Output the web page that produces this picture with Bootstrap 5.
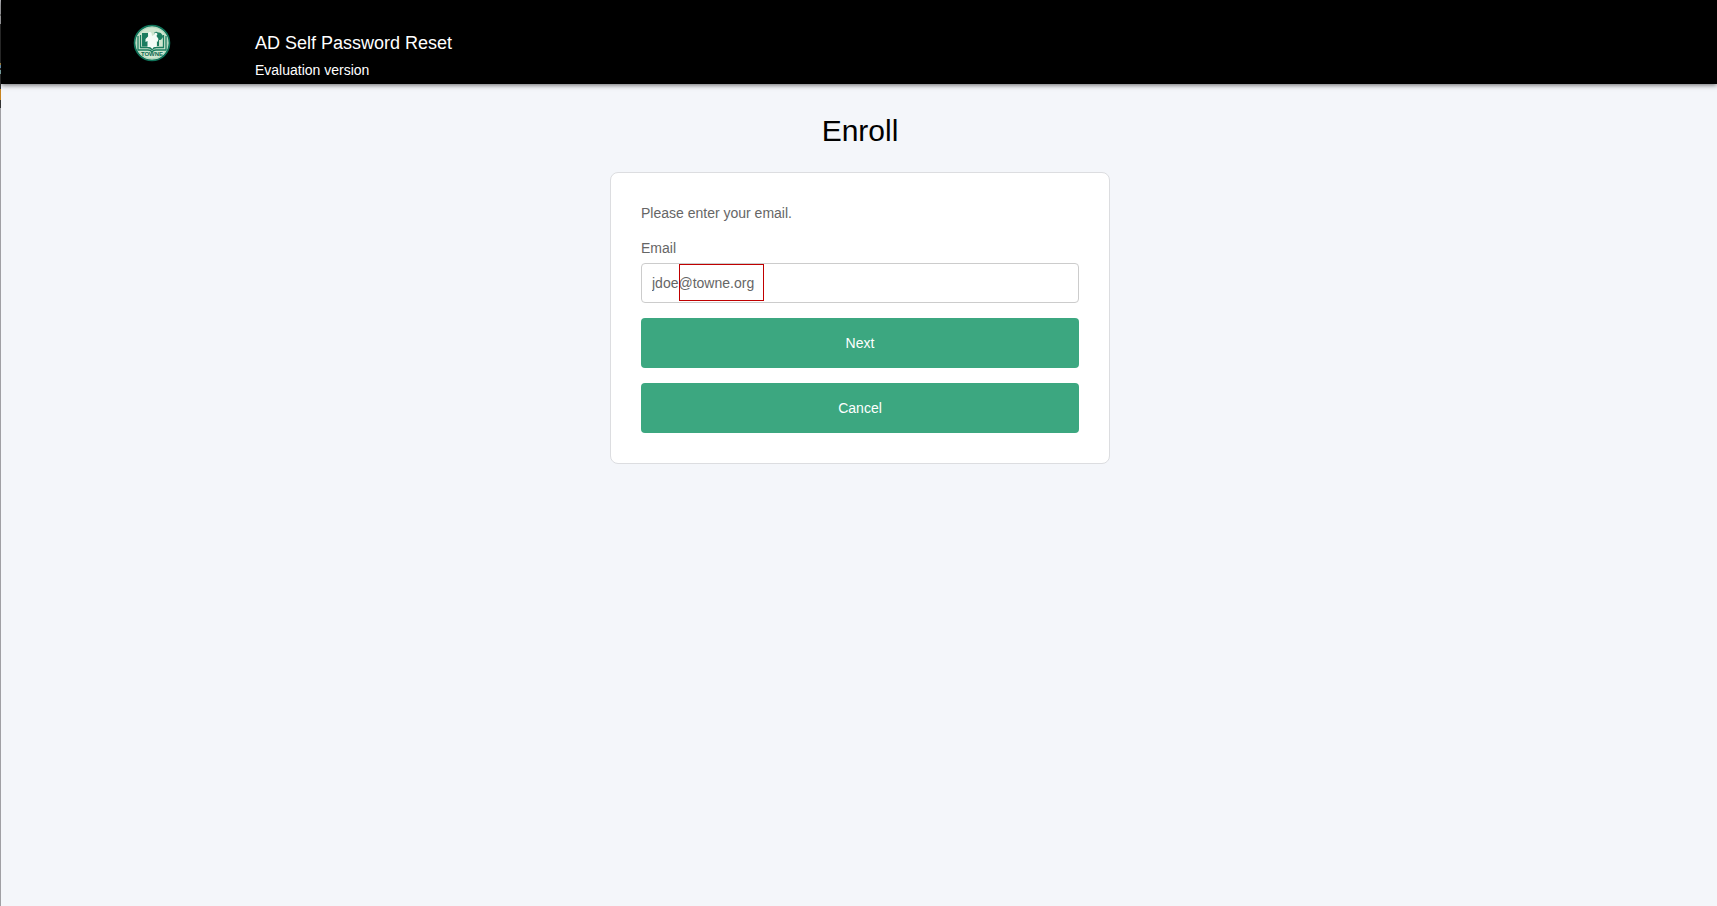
<!DOCTYPE html>
<html lang="en">
<head>
<meta charset="utf-8">
<meta name="viewport" content="width=device-width, initial-scale=1">
<title>AD Self Password Reset - Enroll</title>
<link href="https://cdn.jsdelivr.net/npm/bootstrap@5.3.0/dist/css/bootstrap.min.css" rel="stylesheet">
<style>
  body {
    font-family: "Liberation Sans", Arial, sans-serif;
    font-size: 14px;
    line-height: 20px;
    color: #666;
    background: #f4f6fa;
  }
  .window-edge {
    width: 1px;
    background: linear-gradient(#c0c0c4 0 14px, #888 14px 16px, #c0c0c4 16px 24px, #333 24px 63px, #c9a050 63px 65px, #7fb4d8 65px 68px, #333 68px 70px, #9cc 70px 74px, #333 74px 89px, #c88420 89px 100px, #333 100px 108px, #a0a0a4 108px);
  }
  .site-header {
    padding: 24px 24px 4px 132px;
    background: #000;
    box-shadow: 0 1px 5px rgba(0, 0, 0, .6);
  }
  .brand-logo { width: 38px; height: 38px; margin-right: 84px; }
  .brand-text { padding-top: 7px; }
  .brand-name { font-size: 18px; line-height: 24px; margin-bottom: 5px; }
  .page-main { padding: 29px 0 24px 2px; }
  .page-title { font-size: 30px; line-height: 36px; margin-bottom: 23px; color: #000; }
  .enroll-card {
    --bs-card-border-color: #dcdde0;
    --bs-card-border-radius: 8px;
    --bs-card-color: #666;
    width: 500px;
    max-width: 100%;
  }
  .enroll-card .card-body { padding: 30px; }
  .intro, .email-field { margin-bottom: 15px; }
  .email-field .form-label { margin-bottom: 5px; }
  .email-field .form-control {
    height: 40px;
    padding: 0 10px;
    border-color: #ccc;
    border-radius: 4px;
    color: #666;
    font-size: 14px;
  }
  .domain-mark { left: 38px; top: 1px; width: 85px; height: 37px; border: 1px solid #c00000; pointer-events: none; }
  .actions { gap: 15px; }
  .btn-enroll {
    --bs-btn-color: #fff;
    --bs-btn-bg: #3ca780;
    --bs-btn-hover-color: #fff;
    --bs-btn-hover-bg: #348f6e;
    --bs-btn-active-color: #fff;
    --bs-btn-active-bg: #2d7c5f;
    --bs-btn-border-width: 0;
    --bs-btn-border-radius: 4px;
    --bs-btn-font-size: 14px;
    height: 50px;
  }
</style>
</head>
<body>
<div class="d-flex min-vh-100">
  <div class="window-edge flex-shrink-0"></div>
  <div class="flex-grow-1">
    <header class="site-header d-flex align-items-start text-white">
      <svg class="brand-logo flex-shrink-0" viewBox="0 0 38 38" role="img" aria-label="Towne">
        <circle cx="19" cy="19" r="17.4" fill="#cfe6cf" stroke="#0f7359" stroke-width="1.8"/>
        <circle cx="19" cy="19" r="15.9" fill="none" stroke="#a9d1b8" stroke-width=".8"/>
        <!-- open book -->
        <path d="M5 12v14h10q3 0 4 2 1-2 4-2h10V12" fill="none" stroke="#1b7c5f" stroke-width="1.3"/>
        <path d="M7.500 11v12.500h7q3 0 4.500 2 1.500-2 4.500-2h7V11" fill="none" stroke="#1b7c5f" stroke-width="1.300"/>
        <path d="M9 9h6v13.500H9z" fill="#1b7c5f"/>
        <!-- tree -->
        <path d="M21 9q2-2 4-.5 3-.5 4 2 2 2 0 4-1 2-3 1.500v6h-2v-5l-3-1z" fill="#1b7c5f"/>
        <!-- figures -->
        <path d="M15 9q2-2 3.500 0l.5 3 2-1 .5-2q2-1 3 1l-1 2 2 3-1 3-1-1v6h-3l-1 2-2-2h-3v-6l-2 1v-3l3-3z" fill="#f4fcf6"/>
        <text x="19" y="32" text-anchor="middle" font-family="Liberation Sans, sans-serif" font-size="6" font-weight="700" fill="#0f6b50">TOWNE</text>
      </svg>
      <div class="brand-text">
        <div class="brand-name">AD Self Password Reset</div>
        <div>Evaluation version</div>
      </div>
    </header>
    <main class="page-main d-flex flex-column align-items-center">
      <h1 class="page-title fw-normal">Enroll</h1>
      <form class="card enroll-card">
        <div class="card-body">
          <p class="intro">Please enter your email.</p>
          <div class="email-field">
            <label class="form-label d-block" for="email">Email</label>
            <div class="position-relative">
              <input class="form-control" type="email" id="email" value="jdoe@towne.org">
              <span class="domain-mark position-absolute"></span>
            </div>
          </div>
          <div class="actions d-grid">
            <button class="btn btn-enroll" type="submit">Next</button>
            <button class="btn btn-enroll" type="button">Cancel</button>
          </div>
        </div>
      </form>
    </main>
  </div>
</div>
<script src="https://cdn.jsdelivr.net/npm/bootstrap@5.3.0/dist/js/bootstrap.bundle.min.js"></script>
</body>
</html>
